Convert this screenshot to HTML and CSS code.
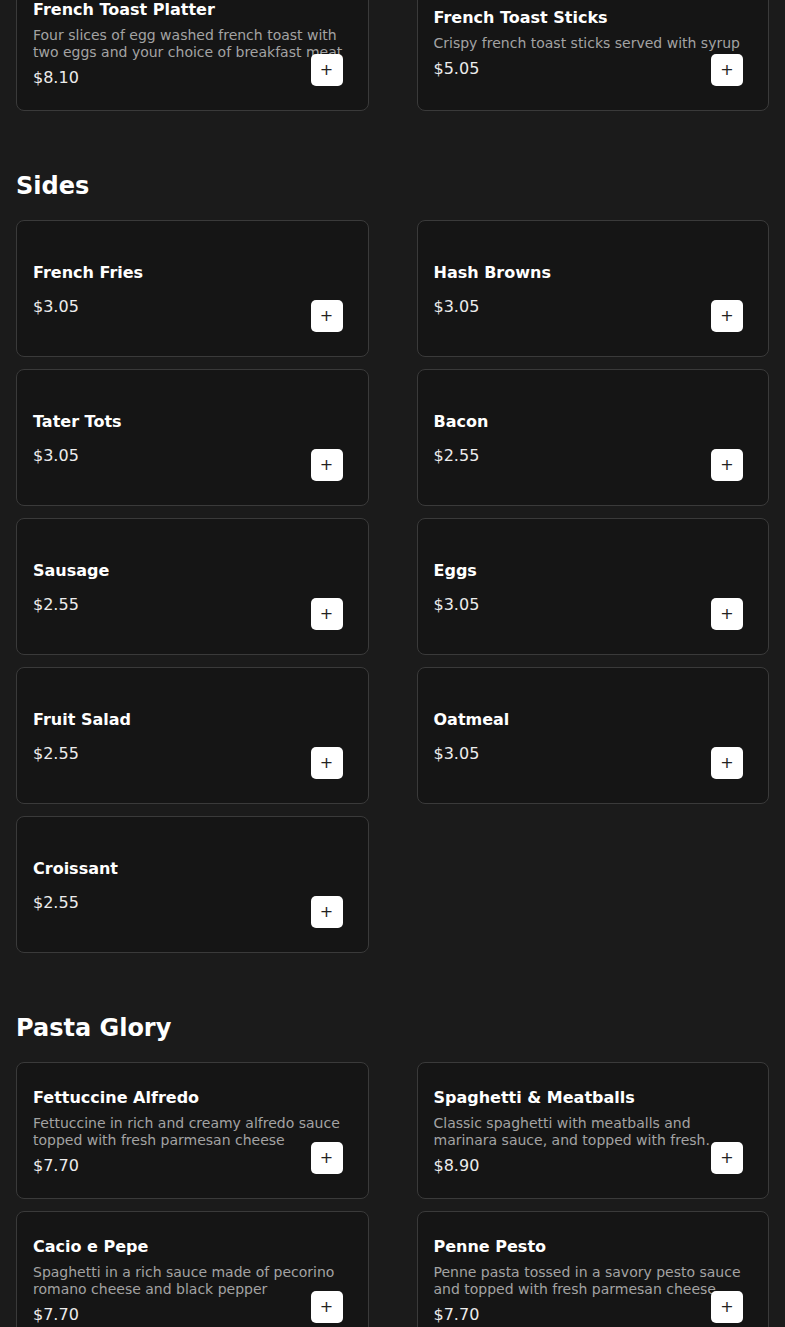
FILE: index.html
```html
<!DOCTYPE html>
<html lang="en">
<head>
    <meta charset="UTF-8">
    <title>Menu</title>
    <link rel="stylesheet" href="styles.css">
</head>
<body>
    <div class="menu">
        <!-- Breakfast (scrolled past) -->
        <div class="section first">
            <div class="grid">
                <div class="item">
                    <div class="item-name">French Toast Platter</div>
                    <p class="item-desc">Four slices of egg washed french toast with two eggs and your choice of breakfast meat</p>
                    <div class="item-price">$8.10</div>
                    <button class="add">+</button>
                </div>
                <div class="item">
                    <div class="item-name">French Toast Sticks</div>
                    <p class="item-desc">Crispy french toast sticks served with syrup</p>
                    <div class="item-price">$5.05</div>
                    <button class="add">+</button>
                </div>
            </div>
        </div>

        <div class="section">
            <h2>Sides</h2>
            <div class="grid">
                <div class="item">
                    <div class="item-name">French Fries</div>
                    <p class="item-desc"></p>
                    <div class="item-price">$3.05</div>
                    <button class="add">+</button>
                </div>
                <div class="item">
                    <div class="item-name">Hash Browns</div>
                    <p class="item-desc"></p>
                    <div class="item-price">$3.05</div>
                    <button class="add">+</button>
                </div>
                <div class="item">
                    <div class="item-name">Tater Tots</div>
                    <p class="item-desc"></p>
                    <div class="item-price">$3.05</div>
                    <button class="add">+</button>
                </div>
                <div class="item">
                    <div class="item-name">Bacon</div>
                    <p class="item-desc"></p>
                    <div class="item-price">$2.55</div>
                    <button class="add">+</button>
                </div>
                <div class="item">
                    <div class="item-name">Sausage</div>
                    <p class="item-desc"></p>
                    <div class="item-price">$2.55</div>
                    <button class="add">+</button>
                </div>
                <div class="item">
                    <div class="item-name">Eggs</div>
                    <p class="item-desc"></p>
                    <div class="item-price">$3.05</div>
                    <button class="add">+</button>
                </div>
                <div class="item">
                    <div class="item-name">Fruit Salad</div>
                    <p class="item-desc"></p>
                    <div class="item-price">$2.55</div>
                    <button class="add">+</button>
                </div>
                <div class="item">
                    <div class="item-name">Oatmeal</div>
                    <p class="item-desc"></p>
                    <div class="item-price">$3.05</div>
                    <button class="add">+</button>
                </div>
                <div class="item">
                    <div class="item-name">Croissant</div>
                    <p class="item-desc"></p>
                    <div class="item-price">$2.55</div>
                    <button class="add">+</button>
                </div>
            </div>
        </div>

        <div class="section">
            <h2>Pasta Glory</h2>
            <div class="grid">
                <div class="item">
                    <div class="item-name">Fettuccine Alfredo</div>
                    <p class="item-desc">Fettuccine in rich and creamy alfredo sauce topped with fresh parmesan cheese</p>
                    <div class="item-price">$7.70</div>
                    <button class="add">+</button>
                </div>
                <div class="item">
                    <div class="item-name">Spaghetti &amp; Meatballs</div>
                    <p class="item-desc">Classic spaghetti with meatballs and marinara sauce, and topped with fresh.</p>
                    <div class="item-price">$8.90</div>
                    <button class="add">+</button>
                </div>
                <div class="item">
                    <div class="item-name">Cacio e Pepe</div>
                    <p class="item-desc">Spaghetti in a rich sauce made of pecorino romano cheese and black pepper</p>
                    <div class="item-price">$7.70</div>
                    <button class="add">+</button>
                </div>
                <div class="item">
                    <div class="item-name">Penne Pesto</div>
                    <p class="item-desc">Penne pasta tossed in a savory pesto sauce and topped with fresh parmesan cheese</p>
                    <div class="item-price">$7.70</div>
                    <button class="add">+</button>
                </div>
            </div>
        </div>
    </div>
</body>
</html>
```

FILE: styles.css
```css
body {
    font-family: "DejaVu Sans", sans-serif;
    margin: 0;
    background: #1b1b1b;
    color: #ffffff;
}
.menu {
    padding: 0 16px;
}
.section {
    display: flow-root;
    margin-bottom: 40px;
}
.section.first {
    margin-top: -26px;
}
h2 {
    font-size: 24px;
    font-weight: bold;
    margin: 21px 0 20px;
}
.grid {
    display: grid;
    grid-template-columns: 1fr 1fr;
    column-gap: 48px;
    row-gap: 12px;
}
.item {
    position: relative;
    box-sizing: border-box;
    height: 137px;
    padding: 2px 16px 0;
    background: #151515;
    border: 1px solid #3a3a3a;
    border-radius: 8px;
    display: flex;
    flex-direction: column;
    justify-content: center;
    gap: 5px;
}
.item-name {
    font-size: 16px;
    font-weight: bold;
    line-height: 24px;
}
.item-desc {
    margin: 0;
    font-size: 14px;
    line-height: 17px;
    color: #a3a3a3;
}
.item-price {
    font-size: 16px;
    line-height: 24px;
    color: #ececec;
}
.add {
    position: absolute;
    right: 25px;
    bottom: 24px;
    width: 32px;
    height: 32px;
    padding: 0;
    border: none;
    border-radius: 5px;
    background: #ffffff;
    color: #222222;
    font-family: "DejaVu Sans", sans-serif;
    font-size: 16px;
    line-height: 32px;
    cursor: pointer;
}
```
